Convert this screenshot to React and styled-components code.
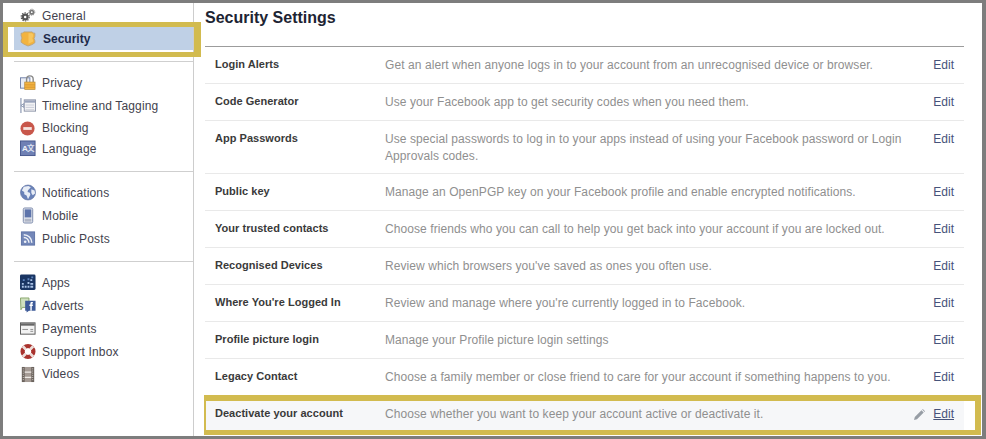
import React from "react";
import styled, { createGlobalStyle } from "styled-components";

const Global = createGlobalStyle`
  html, body { margin: 0; padding: 0; background: #fff; }
  body { font-family: "Liberation Sans", Arial, sans-serif; }
`;

const Frame = styled.div`
  position: relative;
  box-sizing: border-box;
  width: 986px;
  height: 439px;
  border: solid #7d7d7d;
  border-width: 3px 4px 3px 3px;
  display: flex;
  overflow: hidden;
  background: #fff;
`;

const Sidebar = styled.nav`
  box-sizing: border-box;
  width: 191px;
  border-right: 1px solid #cdcdcd;
  padding-top: 1px;
  flex: none;
`;

const Group = styled.div`
  padding: ${(p) => p.$pad || "0"};
  margin-left: 11px;
  border-bottom: ${(p) => (p.$last ? "none" : "1px solid #cfcfcf")};
`;

const NavRow = styled.div`
  height: ${(p) => p.$h || 23}px;
  display: flex;
  align-items: center;
  gap: 6px;
  padding-left: 6px;
  font-size: 12px;
  letter-spacing: 0.15px;
  color: ${(p) => (p.$active ? "#1d2a4a" : "#43434e")};
  font-weight: ${(p) => (p.$active ? 700 : 400)};
  background: ${(p) => (p.$active ? "#bfd0e6" : "transparent")};
`;

const NavLabel = styled.span`
  margin-left: ${(p) => (p.$active ? "1px" : "0")};
  letter-spacing: ${(p) => (p.$active ? "0" : "inherit")};
`;

const IconBox = styled.span`
  width: 16px;
  height: 17px;
  flex: none;
  display: block;
  svg { display: block; width: 16px; height: 17px; }
`;

const Main = styled.main`
  flex: 1;
  padding-left: 11px;
  padding-right: 18px;
  min-width: 0;
`;

const Title = styled.h1`
  margin: 0;
  height: 44px;
  box-sizing: border-box;
  padding: 6px 0 0 0;
  font-size: 16px;
  line-height: 17px;
  font-weight: 700;
  color: #1d2433;
  border-bottom: 1px solid #9c9c9c;
`;

const Row = styled.div`
  display: flex;
  box-sizing: border-box;
  min-height: ${(p) => (p.$hl ? 35 : 37)}px;
  padding: 9px 10px 8px;
  border-bottom: ${(p) => (p.$last ? "none" : "1px solid #e9e9e9")};
  background: ${(p) => (p.$hl ? "#f6f7f9" : "transparent")};
`;

const Label = styled.div`
  width: 170px;
  flex: none;
  margin-top: 1px;
  font-size: 11px;
  line-height: 14px;
  font-weight: 700;
  letter-spacing: 0.03px;
  color: #3a3a3a;
`;

const Desc = styled.div`
  flex: 1;
  margin-top: 1px;
  font-size: 12px;
  line-height: 17px;
  letter-spacing: 0.08px;
  color: #8f8f8f;
`;

const Pencil = styled.span`
  width: 11px;
  height: 11px;
  margin: 4px 8px 0 0;
  flex: none;
  svg { display: block; width: 11px; height: 11px; }
`;

const EditLink = styled.a`
  flex: none;
  margin-top: 1px;
  font-size: 12px;
  line-height: 17px;
  color: #46537a;
  text-decoration: ${(p) => (p.$hl ? "underline" : "none")};
`;

const Highlight = styled.div`
  position: absolute;
  box-sizing: border-box;
  border-style: solid;
  border-color: #d2bb4f;
  pointer-events: none;
`;

const SecurityHighlight = styled(Highlight)`
  left: 0;
  top: 19px;
  width: 198px;
  height: 35px;
  border-width: 5px 7px 5px 5px;
`;

const DeactivateHighlight = styled(Highlight)`
  left: 201px;
  top: 392px;
  width: 777px;
  height: 40px;
  border-width: 6px 6px 5px 2px;
`;

const I = {
  general: (
    <svg viewBox="0 0 17 17">
      <circle cx="5.500" cy="10" r="2.500" fill="none" stroke="#555" strokeWidth="2.400" />
      <circle cx="5.500" cy="10" r="4.300" fill="none" stroke="#555" strokeWidth="1.200" strokeDasharray="1.500 1.200" />
      <circle cx="12.500" cy="5" r="1.800" fill="none" stroke="#777" strokeWidth="1.800" />
      <circle cx="12.500" cy="5" r="3.200" fill="none" stroke="#777" strokeWidth="1" strokeDasharray="1.200 1" />
    </svg>
  ),
  security: (
    <svg viewBox="0 0 17 17">
      <path d="M4 1.500h9l1.300 1.300h1.500v3.400l-.9 2.300.9 2.300v2.200l-3 2-4.300 1.500L4.200 14.500l-3-2v-2.200l.9-2.300-.9-2.300V2.800h1.500z" fill="#f2b33f" stroke="#b9a27c" strokeWidth=".9" />
      <path d="M9 3h3.700l1.300 1.200v2l-.9 2.100.9 2.400v1.100l-5 2.300z" fill="#f7c65e" />
    </svg>
  ),
  privacy: (
    <svg viewBox="0 0 17 17">
      <rect x=".5" y="3.500" width="10" height="11" fill="#e9edf5" stroke="#6d7ea6" />
      <path d="M7 8V4.500a3.500 3.500 0 0 1 7 0V8" transform="translate(0 .5)" fill="none" stroke="#8a8a8a" strokeWidth="1.500" />
      <rect x="5" y="8" width="11" height="8" fill="#f3b342" stroke="#b58a3a" strokeWidth=".7" />
      <path d="M5 11h11M5 13.500h11" stroke="#d1922a" strokeWidth=".8" />
    </svg>
  ),
  timeline: (
    <svg viewBox="0 0 17 17">
      <path d="M1 .5v16" stroke="#6f7f9f" />
      <path d="M1 8.500l3-2v4z" fill="#fff" stroke="#6f7f9f" strokeWidth=".8" />
      <rect x="4.500" y="2.500" width="12" height="12" fill="#f3f3f5" stroke="#8b93a7" />
      <rect x="5" y="3" width="11" height="2.500" fill="#9aa4bc" />
      <path d="M6 8h9M6 10.500h9M6 13h9" stroke="#c8ccd6" />
    </svg>
  ),
  blocking: (
    <svg viewBox="0 0 17 17">
      <circle cx="8" cy="8.500" r="7.500" fill="#c8574b" />
      <rect x="3.500" y="7" width="9" height="3" fill="#f6e4e0" />
    </svg>
  ),
  language: (
    <svg viewBox="0 0 17 17">
      <rect x=".5" y=".5" width="15.500" height="15.500" fill="#6f80b4" stroke="#45568c" />
      <text x="2" y="11.500" fontSize="8.500" fontWeight="700" fontFamily="Liberation Sans" fill="#eef1f8">A</text>
      <text x="7.500" y="11.500" fontSize="8" fontWeight="700" fontFamily="Noto Sans CJK SC" fill="#dfe4f2">文</text>
    </svg>
  ),
  notifications: (
    <svg viewBox="0 0 17 17">
      <circle cx="8.500" cy="8.500" r="8" fill="#6a82b8" stroke="#55699c" strokeWidth=".6" />
      <path d="M4 2.500l5-1 2.500 1.500L8.500 6 8 8l2.500.8.500 2-2.500 5-1.500-4-2.500-1.500V8L2 6.500z" fill="#e8edf6" />
      <path d="M12 5l3.500 1.500.5 3-2.500 2-1.500-2.500z" fill="#e8edf6" />
    </svg>
  ),
  mobile: (
    <svg viewBox="0 0 17 17">
      <rect x="3.500" y=".5" width="10" height="16" rx="1.500" fill="#dfe3ec" stroke="#7a88aa" />
      <rect x="5" y="2" width="7" height="8.500" fill="#5e74ab" />
      <rect x="5" y="12" width="7" height="3" fill="#b0b6c6" />
    </svg>
  ),
  posts: (
    <svg viewBox="0 0 17 17">
      <rect x="1.500" y="1.500" width="14" height="14" fill="#7387b8" stroke="#5f73a6" />
      <circle cx="5.500" cy="12" r="1.400" fill="#eef1f7" />
      <path d="M4 7.500a5.500 5.500 0 0 1 5.500 5.500M4 4.500A8.500 8.500 0 0 1 12.500 13" fill="none" stroke="#eef1f7" strokeWidth="1.600" />
    </svg>
  ),
  apps: (
    <svg viewBox="0 0 17 17">
      <rect x="0" y="0" width="16.500" height="16.500" rx="1.500" fill="#1a3563" />
      <path d="M2 9h2v2H2zM5 12h2v2H5zM2 12h2v2H2zM8 12h2v2H8zM11 12h3v2h-3zM8 8h2v2H8zM11 5h2v2h-2zM11 9h3v2h-3z" fill="#a9c2e6" />
      <path d="M12 2h2v2h-2zM8 4h2v2H8zM3 5h2v2H3z" fill="#5d83bd" />
    </svg>
  ),
  adverts: (
    <svg viewBox="0 0 17 17">
      <path d="M.5.500h9v10h-7L1 13z" fill="#cfe0bf" stroke="#86a36a" />
      <path d="M5.500 3.500h11v10.500h-7L7 16v-2H5.500z" fill="#3d5a98" />
      <path d="M11 14V9h-1V7.500h1V6.300c0-1 .7-1.500 1.700-1.500h1V6.300H13c-.4 0-.5.2-.5.5v.7h1.300L13.600 9h-1.100v5z" fill="#fff" />
    </svg>
  ),
  payments: (
    <svg viewBox="0 0 17 17">
      <rect x=".5" y="2.500" width="15.500" height="12" fill="#f2f2f2" stroke="#555" />
      <rect x="1" y="3" width="14.500" height="2.500" fill="#666" />
      <path d="M2.500 9.500h6M11 9.500h3M11 11.500h3" stroke="#8a8a8a" />
    </svg>
  ),
  support: (
    <svg viewBox="0 0 17 17">
      <circle cx="8.500" cy="8.500" r="5.700" fill="none" stroke="#a9322d" strokeWidth="4.600" />
      <path d="M3 3l3 3M14 3l-3 3M3 14l3-3M14 14l-3-3" stroke="#ecdcd8" strokeWidth="3" />
      <circle cx="8.500" cy="8.500" r="3.200" fill="#fff" />
    </svg>
  ),
  videos: (
    <svg viewBox="0 0 17 17">
      <rect x="2" y=".5" width="13" height="16" fill="#a59b95" />
      <rect x="2" y=".5" width="3" height="16" fill="#6a625c" />
      <rect x="12" y=".5" width="3" height="16" fill="#6a625c" />
      <path d="M3.500 2v13.500M13.500 2v13.500" stroke="#d8d4d0" strokeDasharray="1 1.300" />
      <path d="M5 6h7M5 11.500h7" stroke="#eeeae6" strokeWidth="1.200" />
    </svg>
  ),
};

const NavItem = ({ icon, label, h, active }) => (
  <NavRow $h={h} $active={active}>
    <IconBox>{I[icon]}</IconBox>
    <NavLabel $active={active}>{label}</NavLabel>
  </NavRow>
);

const rows = [
  ["Login Alerts", "Get an alert when anyone logs in to your account from an unrecognised device or browser."],
  ["Code Generator", "Use your Facebook app to get security codes when you need them."],
  ["App Passwords", "Use special passwords to log in to your apps instead of using your Facebook password or Login Approvals codes."],
  ["Public key", "Manage an OpenPGP key on your Facebook profile and enable encrypted notifications."],
  ["Your trusted contacts", "Choose friends who you can call to help you get back into your account if you are locked out."],
  ["Recognised Devices", "Review which browsers you've saved as ones you often use."],
  ["Where You're Logged In", "Review and manage where you're currently logged in to Facebook."],
  ["Profile picture login", "Manage your Profile picture login settings"],
  ["Legacy Contact", "Choose a family member or close friend to care for your account if something happens to you."],
];

export default function App() {
  return (
    <>
      <Global />
      <Frame>
        <Sidebar>
          <Group $pad="0 0 11px">
            <NavItem icon="general" label="General" />
            <NavItem icon="security" label="Security" active />
          </Group>
          <Group $pad="9px 0 13px">
            <NavItem icon="privacy" label="Privacy" />
            <NavItem icon="timeline" label="Timeline and Tagging" />
            <NavItem icon="blocking" label="Blocking" h={22} />
            <NavItem icon="language" label="Language" h={19} />
          </Group>
          <Group $pad="9px 0 11px">
            <NavItem icon="notifications" label="Notifications" />
            <NavItem icon="mobile" label="Mobile" />
            <NavItem icon="posts" label="Public Posts" />
          </Group>
          <Group $pad="9px 0 0" $last>
            <NavItem icon="apps" label="Apps" />
            <NavItem icon="adverts" label="Adverts" />
            <NavItem icon="payments" label="Payments" />
            <NavItem icon="support" label="Support Inbox" />
            <NavItem icon="videos" label="Videos" h={22} />
          </Group>
        </Sidebar>
        <Main>
          <Title>Security Settings</Title>
          {rows.map(([a, b]) => (
            <Row key={a}>
              <Label>{a}</Label>
              <Desc>{b}</Desc>
              <EditLink>Edit</EditLink>
            </Row>
          ))}
          <Row $hl $last>
            <Label>Deactivate your account</Label>
            <Desc>Choose whether you want to keep your account active or deactivate it.</Desc>
            <Pencil>
              <svg viewBox="0 0 11 11"><path d="M0 11l.8-3L7.500 1.300 9.700 3.500 3 10.200z M8.200.6l.6-.5L11 2.300l-.5.6z" fill="#979da5" /></svg>
            </Pencil>
            <EditLink $hl>Edit</EditLink>
          </Row>
        </Main>
        <SecurityHighlight />
        <DeactivateHighlight />
      </Frame>
    </>
  );
}
